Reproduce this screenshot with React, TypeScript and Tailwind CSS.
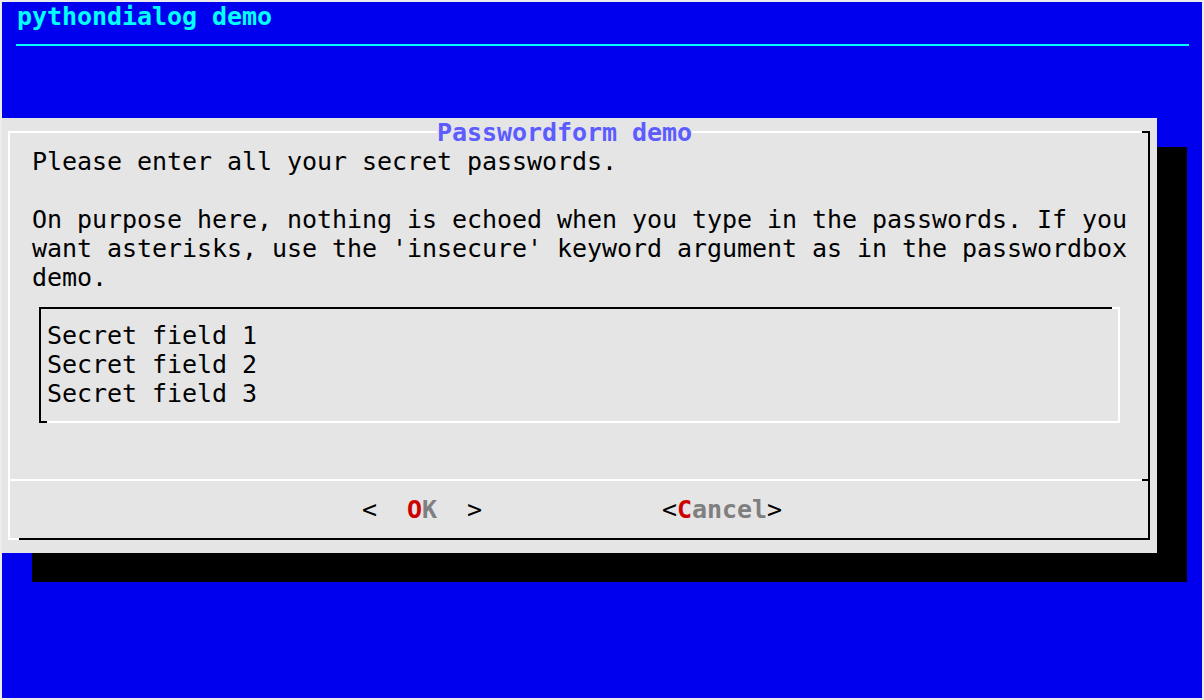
export default function App() {
  return (
    <div className="w-[1204px] h-[700px] bg-[#ececec] p-[2px]">
      <div className="w-[1200px] h-[696px] bg-[#0000ee] font-['DejaVu_Sans_Mono',monospace] text-[25px] tracking-[-0.05px] leading-[29px] overflow-hidden">
        {/* backtitle */}
        <div className="h-[29px] pl-[15px] font-bold text-[#00ffff] whitespace-pre">pythondialog demo</div>
        <div className="h-[29px] pt-[13px] pl-[14px]">
          <div className="w-[1173px] h-[2px] bg-[#00ffff]" />
        </div>
        <div className="h-[58px]" />

        {/* dialog */}
        <div className="w-[1155px] h-[435px] bg-[#e5e5e5] shadow-[30px_29px_0_0_#000] pt-[13px] pl-[6px] text-black">
          <div className="relative w-[1142px] h-[409px] border-2 border-t-white border-l-white border-r-black border-b-black">
            {/* corner stubs */}
            <div className="absolute -top-[2px] -right-[2px] w-[8px] h-[2px] bg-black" />
            <div className="absolute -bottom-[2px] -left-[2px] w-[11px] h-[2px] bg-white" />
            <div className="absolute -top-[15px] left-[427px] h-[29px] bg-[#e5e5e5] font-bold text-[#5c5cff] whitespace-pre">Passwordform demo</div>

            <div className="pt-[14px] pl-[22px] whitespace-pre">
              <div className="h-[29px]">Please enter all your secret passwords.</div>
              <div className="h-[29px]" />
              <div className="h-[29px]">On purpose here, nothing is echoed when you type in the passwords. If you</div>
              <div className="h-[29px]">want asterisks, use the 'insecure' keyword argument as in the passwordbox</div>
              <div className="h-[29px]">demo.</div>
            </div>

            {/* form box */}
            <div className="relative mt-[15px] ml-[29px] w-[1081px] h-[116px] border-2 border-t-black border-l-black border-r-white border-b-white pt-[12px] pl-[6px] whitespace-pre">
              <div className="absolute -top-[2px] -right-[2px] w-[8px] h-[2px] bg-white" />
              <div className="absolute -bottom-[2px] -left-[2px] w-[8px] h-[2px] bg-black" />
              <div className="h-[29px]">Secret field 1</div>
              <div className="h-[29px]">Secret field 2</div>
              <div className="h-[29px]">Secret field 3</div>
            </div>

            {/* separator */}
            <div className="mt-[56px] -ml-[2px] flex h-[2px]">
              <div className="w-[1134px] bg-white" />
              <div className="flex-1 bg-black" />
            </div>

            {/* buttons */}
            <div className="mt-[14px] h-[29px] pl-[352px] whitespace-pre">
              <span>{'<  '}</span>
              <span className="font-bold text-[#cd0000]">O</span>
              <span className="font-bold text-[#7f7f7f]">K</span>
              <span>{'  >            <'}</span>
              <span className="font-bold text-[#cd0000]">C</span>
              <span className="font-bold text-[#7f7f7f]">ancel</span>
              <span>{'>'}</span>
            </div>
          </div>
        </div>
      </div>
    </div>
  );
}
